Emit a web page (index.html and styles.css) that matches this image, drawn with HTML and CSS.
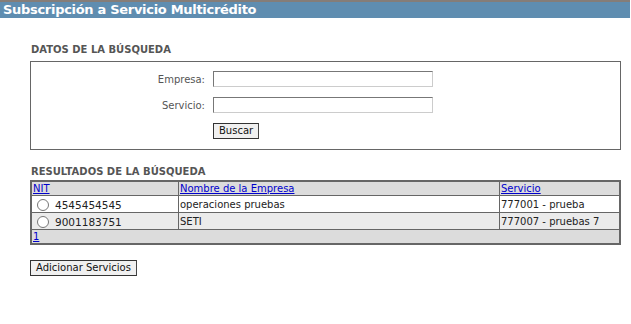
FILE: index.html
```html
<!DOCTYPE html>
<html lang="es">
<head>
  <meta charset="UTF-8" />
  <title>Subscripción a Servicio Multicrédito</title>
  <link rel="stylesheet" href="styles.css">
</head>
<body>

  <div class="titulo">Subscripción a Servicio Multicrédito</div>

  <div class="contenido">
    <!-- Datos de busqueda -->
    <h3>DATOS DE LA BÚSQUEDA</h3>
    <div class="busqueda">
      <form class="form-busqueda">
        <label for="empresa">Empresa:</label>
        <input type="text" id="empresa" name="empresa" />

        <label for="servicio">Servicio:</label>
        <input type="text" id="servicio" name="servicio" />

        <span></span>
        <div><button type="button" class="boton">Buscar</button></div>
      </form>
    </div>

    <!-- Resultados -->
    <h3 class="res">RESULTADOS DE LA BÚSQUEDA</h3>
    <table class="resultados">
      <tr class="cab">
        <th class="c1"><a href="#">NIT</a></th>
        <th class="c2"><a href="#">Nombre de la Empresa</a></th>
        <th><a href="#">Servicio</a></th>
      </tr>
      <tr class="fila">
        <td><label class="nit"><input type="radio" name="sel" /> 4545454545</label></td>
        <td>operaciones pruebas</td>
        <td>777001 - prueba</td>
      </tr>
      <tr class="fila alt">
        <td><label class="nit"><input type="radio" name="sel" /> 9001183751</label></td>
        <td>SETI</td>
        <td>777007 - pruebas 7</td>
      </tr>
      <tr class="pie">
        <td colspan="3"><a href="#">1</a></td>
      </tr>
    </table>

    <button type="button" class="boton adicionar">Adicionar Servicios</button>
  </div>

</body>
</html>
```

FILE: styles.css
```css
body {
  margin: 0;
  font-family: "DejaVu Sans", Verdana, sans-serif;
  font-size: 10px;
  color: #222;
  background: white;
}
.titulo {
  width: 630px;
  border-top: 2px solid #857d78;
  background: #5f8db0;
  color: white;
  font-weight: bold;
  font-size: 13px;
  line-height: 16px;
  padding-left: 3px;
  box-sizing: border-box;
  letter-spacing: -0.3px;
}
.contenido {
  padding: 0 10px 0 30px;
}
h3 {
  margin: 25px 0 4px 1px;
  font-size: 10px;
  color: #555;
  line-height: 14px;
}
h3.res {
  margin-top: 15px;
  margin-bottom: 1px;
}
.busqueda {
  width: 591px;
  height: 89px;
  box-sizing: border-box;
  border: 1px solid #666;
  padding-top: 9px;
}
.form-busqueda {
  display: grid;
  grid-template-columns: 174px 220px;
  column-gap: 8px;
  row-gap: 10px;
  align-items: center;
}
.form-busqueda label {
  text-align: right;
  color: #555;
}
.form-busqueda input {
  width: 220px;
  height: 16px;
  box-sizing: border-box;
  margin: 0;
  border: 1px solid #ccc;
  border-top-color: #777;
  border-left-color: #777;
}
.boton {
  font-family: "DejaVu Sans", Verdana, sans-serif;
  font-size: 10px;
  color: #111;
  background: #f0f0f0;
  border: 1px solid #333;
  border-right-color: #444;
  padding: 1px 5px;
  height: 16px;
  line-height: 12px;
  margin: 0;
}
.resultados {
  width: 591px;
  border-collapse: collapse;
  border: 2px solid #666;
}
.resultados th, .resultados td {
  border: 1px solid #666;
  padding: 0 1px;
  text-align: left;
  font-weight: normal;
  vertical-align: bottom;
}
.resultados a {
  color: #00c;
}
.c1 { width: 144px; }
.c2 { width: 318px; }
.cab th, .pie td {
  background: #dcdcdc;
  height: 13px;
  line-height: 13px;
}
.fila td {
  background: white;
  height: 16px;
  line-height: 14px;
}
.fila.alt td {
  background: #ebebeb;
}
.nit {
  display: flex;
  align-items: flex-end;
  gap: 6px;
  padding-left: 4px;
  font-size: 10.5px;
}
.nit input {
  margin: 1px 0;
  width: 12px;
  height: 12px;
}
.adicionar {
  margin-top: 15px;
}
```
